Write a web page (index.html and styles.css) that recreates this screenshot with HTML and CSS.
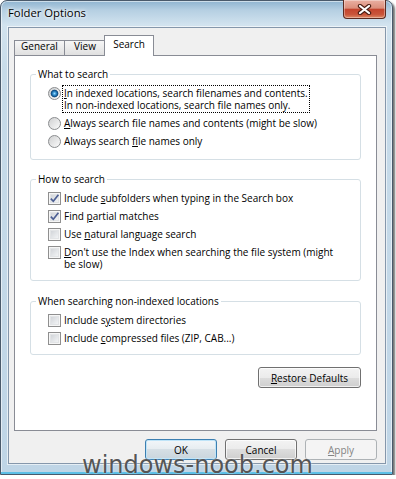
FILE: index.html
```html
<!DOCTYPE html>
<html lang="en">
<head>
  <meta charset="UTF-8" />
  <meta name="viewport" content="width=device-width, initial-scale=1.0" />
  <title>Folder Options</title>
  <link rel="stylesheet" href="styles.css">
</head>
<body>
  <div class="window">
    <div class="titlebar">
      <span class="title">Folder Options</span>
      <div class="close-btn">
        <svg width="15" height="11" viewBox="0 0 15 11">
          <path d="M3 2 L12 9 M12 2 L3 9" stroke="#4b1e14" stroke-width="4.4" stroke-linecap="round" />
          <path d="M3 2 L12 9 M12 2 L3 9" stroke="#fff" stroke-width="2.2" stroke-linecap="round" />
        </svg>
      </div>
    </div>

    <div class="client">
      <div class="tabs">
        <div class="tab tab-general">General</div>
        <div class="tab tab-view">View</div>
        <div class="tab tab-search active">Search</div>
      </div>

      <div class="panel">
        <div class="group group-what">
          <div class="group-title">What to search</div>
          <div class="options">
            <div class="option">
              <span class="radio checked"></span>
              <span class="label focused"><u>I</u>n indexed locations, search filenames and contents.<br>In non-indexed locations, search file names only.</span>
            </div>
            <div class="option">
              <span class="radio"></span>
              <span class="label"><u>A</u>lways search file names and contents (might be slow)</span>
            </div>
            <div class="option">
              <span class="radio"></span>
              <span class="label">Always search <u>f</u>ile names only</span>
            </div>
          </div>
        </div>

        <div class="group group-how">
          <div class="group-title">How to search</div>
          <div class="options">
            <div class="option">
              <span class="check"><svg width="11" height="11" viewBox="0 0 11 11"><path d="M1.8 5.6 L4.3 8.3 L9.4 1.8" fill="none" stroke="#4d5f93" stroke-width="1.7" /></svg></span>
              <span class="label">Include <u>s</u>ubfolders when typing in the Search box</span>
            </div>
            <div class="option">
              <span class="check"><svg width="11" height="11" viewBox="0 0 11 11"><path d="M1.8 5.6 L4.3 8.3 L9.4 1.8" fill="none" stroke="#4d5f93" stroke-width="1.7" /></svg></span>
              <span class="label">Find <u>p</u>artial matches</span>
            </div>
            <div class="option">
              <span class="check"></span>
              <span class="label">Use <u>n</u>atural language search</span>
            </div>
            <div class="option">
              <span class="check"></span>
              <span class="label"><u>D</u>on't use the Index when searching the file system (might<br>be slow)</span>
            </div>
          </div>
        </div>

        <div class="group group-nonindexed">
          <div class="group-title">When searching non-indexed locations</div>
          <div class="options">
            <div class="option">
              <span class="check"></span>
              <span class="label">Include s<u>y</u>stem directories</span>
            </div>
            <div class="option">
              <span class="check"></span>
              <span class="label">Include <u>c</u>ompressed files (ZIP, CAB...)</span>
            </div>
          </div>
        </div>

        <div class="panel-actions">
          <button class="btn btn-restore"><u>R</u>estore Defaults</button>
        </div>
      </div>

      <div class="dialog-buttons">
        <button class="btn btn-default">OK</button>
        <button class="btn">Cancel</button>
        <button class="btn btn-disabled"><u>A</u>pply</button>
      </div>
    </div>

    <div class="watermark">windows-noob.com</div>
  </div>
</body>
</html>
```

FILE: styles.css
```css
* { box-sizing: border-box; }
body {
  margin: 0; background: #fff;
  font-family: 'Open Sans', 'Noto Sans', sans-serif;
  font-size: 10px; color: #000;
}
u { text-decoration: underline; text-underline-offset: 1px; }

/* window frame */
.window {
  position: relative; width: 393px; height: 475px;
  border: 1px solid #4a5a6b; border-radius: 7px 7px 0 0;
  background: linear-gradient(180deg, #8fb4d0 0, #b5cfe2 9px, #d2e3ef 24px, #c7dbe9 70px, #bfd5e6 100%);
  box-shadow: inset 0 -2px 0 #5cbfe6, inset 0 0 0 1px rgba(255,255,255,0.55), 2px 2px 2px rgba(0,0,0,0.55);
}
.titlebar { display: flex; align-items: flex-start; height: 26px; padding-left: 7px; }
.title {
  font-size: 11.3px; line-height: 24px;
  text-shadow: 0 0 5px #fff, 0 0 3px #fff;
}
.close-btn {
  display: flex; align-items: center; justify-content: center;
  width: 43px; height: 19px; margin: -1px 6px 0 auto;
  border: 1px solid #5b2a20; border-top: none; border-radius: 0 0 4px 4px;
  background: linear-gradient(180deg, #eab0a2 0, #db8f7c 45%, #c4452e 52%, #c9553a 80%, #dd8a66 100%);
  box-shadow: inset 0 0 0 1px rgba(255,255,255,0.35);
}

/* client area */
.client {
  width: 378px; height: 437px; margin-left: 7px;
  border: 1px solid #8597ab; background: #f0f0f0;
  padding: 7px 8px 0 5px;
  box-shadow: 0 0 0 1px rgba(255,255,255,0.6);
}
.tabs { display: flex; align-items: flex-end; height: 20px; }
.tab {
  height: 15px; border: 1px solid #898c95; border-bottom: none;
  background: linear-gradient(180deg, #f6f6f6, #e0e0e0);
  line-height: 11px; text-align: center;
}
.tab-general { width: 51px; }
.tab-view { width: 42px; margin-left: -1px; }
.tab.active {
  position: relative; z-index: 1;
  width: 50px; height: 21px; margin: 0 0 -1px -2px; padding-top: 2px;
  background: #fff; line-height: 12px;
}
.panel {
  height: 376px; border: 1px solid #898c95; background: #fff;
  padding: 18px 15px 0;
}

/* group boxes */
.group { border: 1px solid #d5dfe5; border-radius: 3px; padding: 0 0 8px 17px; }
.group-what { padding-bottom: 10px; }
.group-how { margin-top: 19px; }
.group-nonindexed { margin-top: 20px; }
.group-title {
  width: fit-content; margin: -7px 0 0 -12px; padding: 0 2px;
  background: #fff; line-height: 13px;
}
.options { display: flex; flex-direction: column; gap: 2px; margin-top: 4px; }
.option { display: flex; align-items: flex-start; }
.label {
  margin-left: 1px; padding: 1px; border: 1px dotted transparent;
  line-height: 12px; white-space: nowrap;
}
.label.focused { border-color: #000; }

.radio, .check { flex: none; width: 13px; height: 13px; margin-top: 2px; }
.radio {
  border: 1px solid #8a8c8e; border-radius: 50%;
  background: linear-gradient(135deg, #cfd0d1, #fbfbfb);
}
.radio.checked {
  background:
    radial-gradient(circle at 50% 50%, #9fdcff 0, #3594d2 1.6px, #0f4f88 3.2px, #5f7f99 3.8px, transparent 4.2px),
    linear-gradient(135deg, #cfd0d1, #fbfbfb);
}
.check {
  display: flex; align-items: center; justify-content: center;
  border: 1px solid #8f8f8f;
  background: linear-gradient(135deg, #c9ccd1, #eceef0 70%, #fafafa);
  box-shadow: inset 0 0 0 1px #f6f6f6, inset 0 0 0 2px #e2e4e6;
}

/* buttons */
.btn {
  width: 72px; height: 21px; padding: 0;
  border: 1px solid #707070; border-radius: 3px;
  background: linear-gradient(180deg, #f3f3f3 0, #ebebeb 50%, #dddddd 50%, #cfcfcf 100%);
  box-shadow: inset 0 0 0 1px rgba(255,255,255,0.7);
  font-family: inherit; font-size: 10px; color: #000;
}
.btn-default {
  border-color: #3c7fb1;
  background: linear-gradient(180deg, #f2f6f9 0, #e6ecf0 50%, #d6dfe5 50%, #c9d5dd 100%);
  box-shadow: inset 0 0 0 1px #bfe4f8;
}
.btn-disabled { border-color: #adb2b5; background: #f4f4f4; color: #838383; box-shadow: none; }
.btn-restore { width: 103px; }
.panel-actions { display: flex; justify-content: flex-end; margin-top: 12px; }
.dialog-buttons { display: flex; justify-content: flex-end; gap: 8px; margin-top: 8px; }

.watermark {
  position: absolute; left: 81px; top: 452px; z-index: 2;
  font-family: 'DejaVu Sans', sans-serif; font-size: 24px; line-height: 24px;
  color: #555; text-shadow: 0 0 2px rgba(255,255,255,0.8);
}
```
